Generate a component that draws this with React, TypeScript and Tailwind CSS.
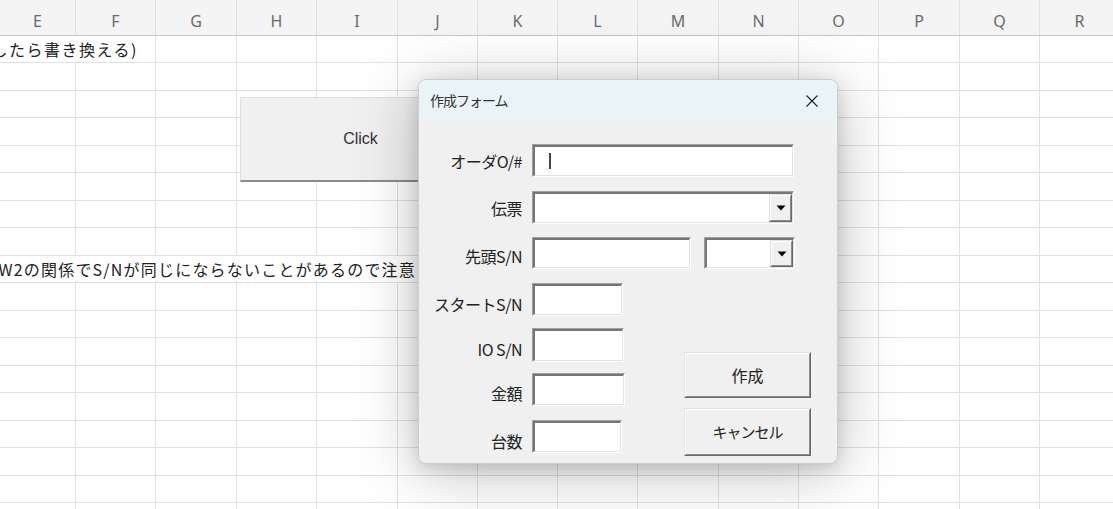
import React from "react";

const COLS = ["E", "F", "G", "H", "I", "J", "K", "L", "M", "N", "O", "P", "Q", "R"];
const GRID =
  "grid grid-cols-[76px_80px_81px_80px_81px_80px_80px_80px_81px_80px_80px_81px_80px_80px]";

const cellFont = { fontFamily: '"Noto Sans CJK JP", "Noto Sans", sans-serif' };
const uiFont = { fontFamily: '"Noto Sans CJK JP", "Noto Sans", sans-serif' };

function Row({ idx }: { idx: number }) {
  const h = idx % 2 === 0 ? "h-[27px]" : "h-[28px]";
  if (idx === 0) {
    return (
      <div className={`${GRID} ${h}`}>
        <div className="col-span-2 border-r border-b border-[#e1e1e1] flex items-center overflow-hidden">
          <div className="flex w-[138px] justify-end whitespace-nowrap text-[16px] tracking-[1.5px] text-[#222]" style={cellFont}>
            したら書き換える)
          </div>
        </div>
        {COLS.slice(2).map((c) => (
          <div key={c} className="border-r border-b border-[#e1e1e1]" />
        ))}
      </div>
    );
  }
  if (idx === 8) {
    return (
      <div className={`${GRID} ${h}`}>
        <div className="col-span-6 border-r border-b border-[#e1e1e1] flex items-center overflow-hidden">
          <div className="flex w-[416px] justify-end whitespace-nowrap text-[16px] tracking-[1.2px] text-[#222]" style={cellFont}>
            W2の関係でS/Nが同じにならないことがあるので注意
          </div>
        </div>
        {COLS.slice(6).map((c) => (
          <div key={c} className="border-r border-b border-[#e1e1e1]" />
        ))}
      </div>
    );
  }
  return (
    <div className={`${GRID} ${h}`}>
      {COLS.map((c) => (
        <div key={c} className="border-r border-b border-[#e1e1e1]" />
      ))}
    </div>
  );
}

function Sunken({ cls, children }: { cls: string; children?: React.ReactNode }) {
  return (
    <div className={`${cls} border border-t-[#a0a0a0] border-l-[#a0a0a0] border-r-white border-b-white`}>
      <div className="h-full w-full border-t-2 border-l-2 border-r border-b border-t-[#767676] border-l-[#767676] border-r-[#e3e3e3] border-b-[#e3e3e3] bg-white flex">
        {children}
      </div>
    </div>
  );
}

function DropBtn() {
  return (
    <div className="ml-auto h-full w-[23px] border border-t-[#e3e3e3] border-l-[#e3e3e3] border-r-[#696969] border-b-[#696969]">
      <div className="h-full w-full border border-t-white border-l-white border-r-[#8a8a8a] border-b-[#8a8a8a] bg-[#f0f0f0] flex items-center justify-center">
        <svg width="10" height="6" viewBox="0 0 10 6">
          <path d="M0.5 0.5 L9.5 0.5 L5 5.5 Z" fill="#000" />
        </svg>
      </div>
    </div>
  );
}

function Raised({ cls, children }: { cls: string; children: React.ReactNode }) {
  return (
    <div className={`${cls} border border-t-[#e3e3e3] border-l-[#e3e3e3] border-r-[#696969] border-b-[#696969]`}>
      <div className="h-full w-full border border-t-white border-l-white border-r-[#8a8a8a] border-b-[#8a8a8a] bg-[#f0f0f0] flex items-center justify-center text-[#222]" style={uiFont}>
        {children}
      </div>
    </div>
  );
}

function Label({ text, cls }: { text: string; cls?: string }) {
  return (
    <div className={`w-[103px] text-right text-[16px] tracking-[-0.5px] text-[#222] whitespace-nowrap ${cls ?? ""}`} style={uiFont}>
      {text}
    </div>
  );
}

export default function App() {
  return (
    <div className="relative w-[1113px] h-[509px] overflow-hidden bg-white">
      {/* column header */}
      <div className={`${GRID} h-[36px] bg-[#f4f4f4] border-b border-[#c6c6c6]`}>
        {COLS.map((c) => (
          <div
            key={c}
            className="border-r border-[#e2e2e2] flex items-center justify-center pt-[7px] text-[16px] text-[#6a6a6a]"
            style={{ fontFamily: '"Noto Sans", sans-serif' }}
          >
            {c}
          </div>
        ))}
      </div>
      {Array.from({ length: 18 }).map((_, i) => (
        <Row key={i} idx={i} />
      ))}

      {/* Click shape on sheet */}
      <div className="absolute left-[240px] top-[97px] w-[240px] h-[85px] bg-[#f0f0f0] border-t border-l border-[#dedede] border-b-2 border-b-[#8c8c8c] flex items-center justify-center">
        <span className="text-[16px] text-[#333]" style={{ fontFamily: '"Liberation Sans", Arial, sans-serif' }}>
          Click
        </span>
      </div>

      {/* Dialog */}
      <div className="absolute left-[418px] top-[79px] w-[420px] h-[385px] rounded-[8px] border border-[#cdcdcd] bg-[#f0f0f0] overflow-hidden flex flex-col shadow-[0_8px_64px_rgba(0,0,0,0.26),0_4px_16px_rgba(0,0,0,0.14)]">
        <div className="h-[41px] shrink-0 bg-[#eaf4f7] flex items-center justify-between pl-[11px] pr-[19px]">
          <span className="text-[14px] tracking-[-1px] text-[#333]" style={uiFont}>
            作成フォーム
          </span>
          <svg width="12" height="12" viewBox="0 0 12 12">
            <path d="M0.5 0.5 L11.5 11.5 M11.5 0.5 L0.5 11.5" stroke="#222" strokeWidth="1.1" />
          </svg>
        </div>
        <div className="flex flex-col pt-[23px]">
          <div className="flex items-center">
            <Label text="オーダO/#" />
            <div className="ml-[10px]">
              <Sunken cls="w-[262px] h-[33px]">
                <div className="flex items-center pl-[14px]">
                  <div className="w-[2px] h-[16px] bg-[#444]" />
                </div>
              </Sunken>
            </div>
          </div>
          <div className="flex items-center mt-[14px]">
            <Label text="伝票" />
            <div className="ml-[10px]">
              <Sunken cls="w-[262px] h-[33px]">
                <DropBtn />
              </Sunken>
            </div>
          </div>
          <div className="flex items-center mt-[13px]">
            <Label text="先頭S/N" cls="pt-[5px]" />
            <div className="ml-[10px] flex gap-[13px]">
              <Sunken cls="w-[159px] h-[32px]" />
              <Sunken cls="w-[91px] h-[32px]">
                <DropBtn />
              </Sunken>
            </div>
          </div>
          <div className="flex mt-[14px]">
            <div className="flex flex-col">
              <div className="flex items-center">
                <Label text="スタートS/N" cls="pt-[8px]" />
                <div className="ml-[10px]">
                  <Sunken cls="w-[91px] h-[33px]" />
                </div>
              </div>
              <div className="flex items-center mt-[12px]">
                <Label text="IO S/N" cls="pt-[7px]" />
                <div className="ml-[10px]">
                  <Sunken cls="w-[92px] h-[34px]" />
                </div>
              </div>
              <div className="flex items-center mt-[11px]">
                <Label text="金額" cls="pt-[7px]" />
                <div className="ml-[10px]">
                  <Sunken cls="w-[93px] h-[33px]" />
                </div>
              </div>
              <div className="flex items-center mt-[14px]">
                <Label text="台数" cls="pt-[9px]" />
                <div className="ml-[10px]">
                  <Sunken cls="w-[90px] h-[33px]" />
                </div>
              </div>
            </div>
            <div className="flex flex-col ml-[59px] mt-[69px]">
              <Raised cls="w-[127px] h-[46px]">
                <span className="text-[16px]">作成</span>
              </Raised>
              <Raised cls="w-[127px] h-[48px] mt-[10px]">
                <span className="text-[15px] tracking-[-1px]">キャンセル</span>
              </Raised>
            </div>
          </div>
        </div>
      </div>
    </div>
  );
}
